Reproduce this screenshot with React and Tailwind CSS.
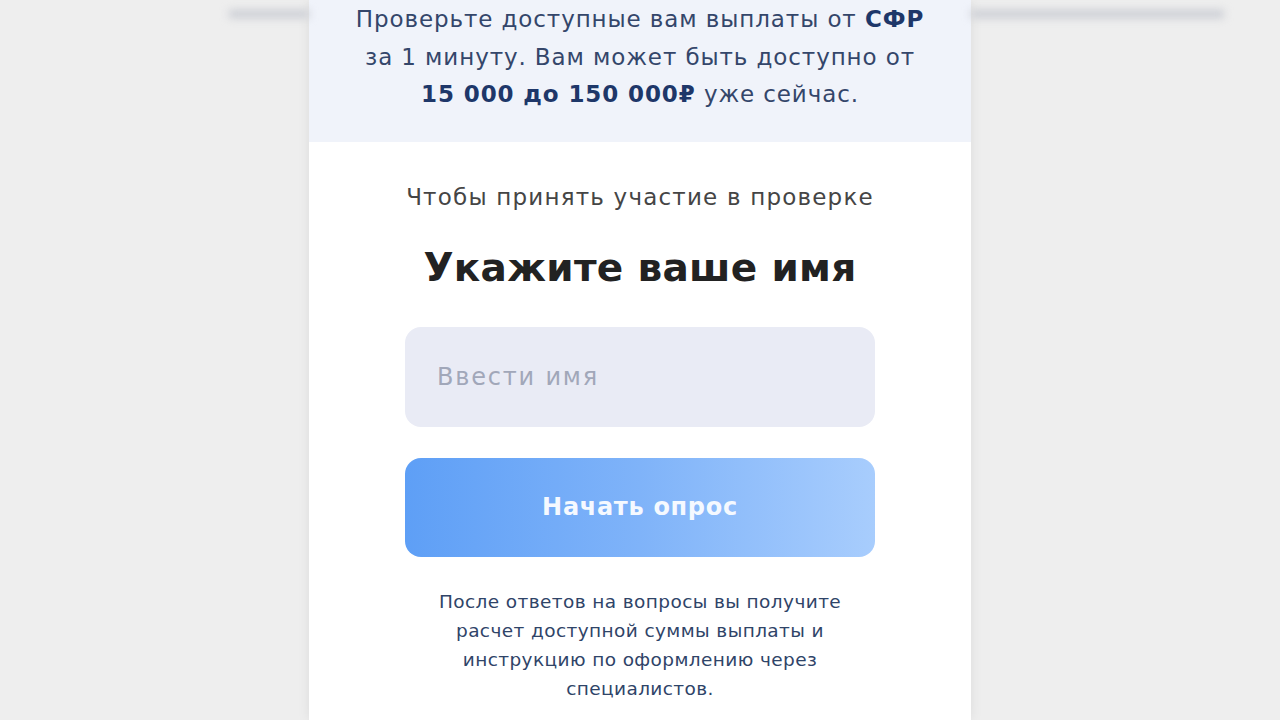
export default function App() {
  return (
    <div className="w-[1280px] h-[720px] overflow-hidden bg-[#eeeeee] flex font-['DejaVu_Sans','Noto_Sans',sans-serif]">
      {/* размытый фон слева */}
      <div className="flex-1 flex flex-col items-end">
        <div className="mt-[10px] h-[8px] w-[80px] bg-[#c9ccd3] blur-[4px]" />
      </div>

      {/* центральная колонка */}
      <div className="w-[662px] h-full flex flex-col bg-white shadow-[0_0_12px_rgba(0,0,0,0.08)]">
        <div className="bg-[#f0f3fa] pt-px pb-[28px] text-center text-[23px] leading-[37.5px] tracking-[0.9px] text-[#34466a]">
          <p>
            Проверьте доступные вам выплаты от <b className="font-bold text-[#1e3769]">СФР</b>
          </p>
          <p>за 1 минуту. Вам может быть доступно от</p>
          <p>
            <b className="font-bold text-[#1e3769]">15 000 до 150 000₽</b> уже сейчас.
          </p>
        </div>

        <div className="flex flex-col items-center pt-[39px]">
          <p className="text-[23px] leading-[32px] tracking-[1.2px] text-[#454545]">Чтобы принять участие в проверке</p>
          <h1 className="mt-[31px] text-[39px] leading-[48px] tracking-[0.3px] font-bold text-[#222222]">Укажите ваше имя</h1>

          <input
            className="mt-[35px] w-[470px] h-[100px] rounded-[16px] bg-[#e9ebf5] px-[32px] text-[24px] tracking-[1.8px] text-[#333] placeholder:text-[#a1a7b9] outline-none"
            placeholder="Ввести имя"
          />

          <button className="mt-[31px] w-[470px] h-[99px] rounded-[16px] bg-gradient-to-r from-[#5e9ff6] via-[#7fb3f9] to-[#a8cdfd] text-[#f5f9ff] text-[24px] tracking-[0.7px] font-semibold">
            Начать опрос
          </button>

          <div className="mt-[30px] text-center text-[18.5px] leading-[29px] tracking-[0.4px] text-[#2f4468]">
            <p>После ответов на вопросы вы получите</p>
            <p>расчет доступной суммы выплаты и</p>
            <p>инструкцию по оформлению через</p>
            <p>специалистов.</p>
          </div>
        </div>
      </div>

      {/* размытый фон справа */}
      <div className="flex-1 flex flex-col items-start">
        <div className="mt-[10px] h-[8px] w-[253px] bg-[#c9ccd3] blur-[4px]" />
      </div>
    </div>
  );
}
